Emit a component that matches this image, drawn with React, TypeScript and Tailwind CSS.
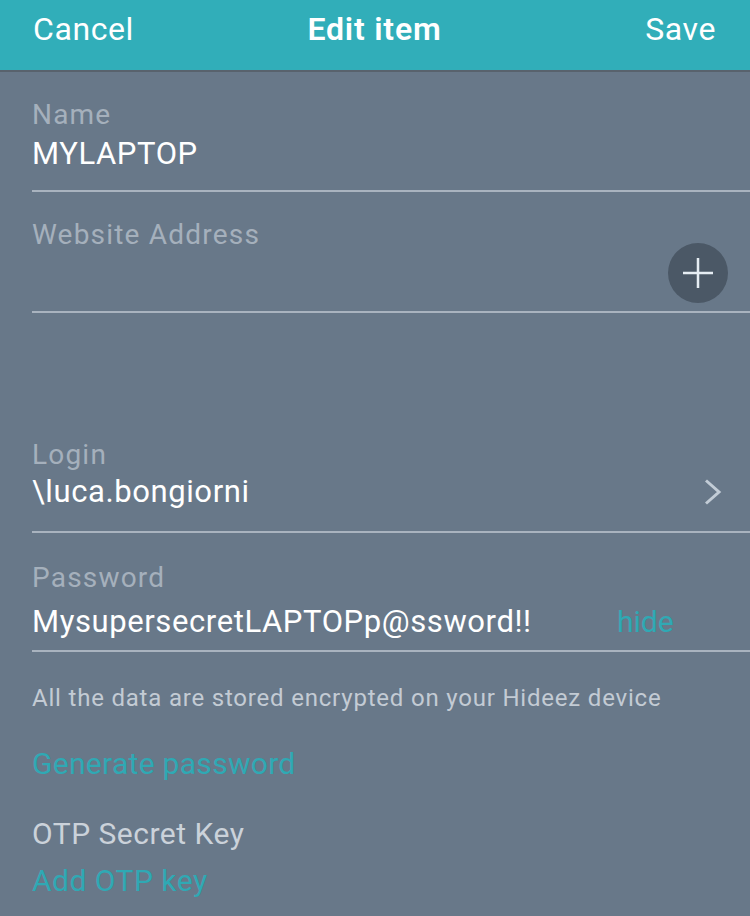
import React from 'react';

const font = { fontFamily: 'Roboto, "Noto Sans", sans-serif' };

function Divider() {
  return <div className="ml-[32px] h-[2px] bg-[#a9b3bf]"></div>;
}

function Label({ children }: { children: React.ReactNode }) {
  return <div className="text-[28px] leading-[32px] tracking-[1.2px] text-[#a5b0bc]">{children}</div>;
}

export default function App() {
  return (
    <div className="w-[750px] h-[916px] bg-[#687889] overflow-hidden" style={font}>
      {/* header */}
      <div className="h-[72px] bg-[#31aeb9] border-b-2 border-[#58626d] grid grid-cols-3 pl-[33px] pr-[34px] pt-[11px] text-white">
        <span className="text-[32px] leading-[36px] tracking-[0.6px]">Cancel</span>
        <span className="text-[32px] leading-[36px] tracking-[0.8px] font-semibold text-center whitespace-nowrap">Edit item</span>
        <span className="text-[32px] leading-[36px] tracking-[0.6px] text-right">Save</span>
      </div>

      {/* name */}
      <div className="pl-[32px] pt-[27px]">
        <Label>Name</Label>
        <div className="mt-[5px] text-[31px] leading-[36px] tracking-[0.6px] text-white">MYLAPTOP</div>
      </div>
      <div className="mt-[18px]"><Divider /></div>

      {/* website */}
      <div className="pl-[32px] pt-[27px] pr-[22px] h-[119px] flex flex-col">
        <Label>Website Address</Label>
        <div className="flex justify-end -mt-[8px]">
          <button className="w-[60px] h-[60px] rounded-full bg-[#4b5866] flex items-center justify-center">
            <svg width="32" height="32" viewBox="0 0 32 32">
              <path d="M16 1V31M1 16H31" stroke="#e6edf3" strokeWidth="2.5" />
            </svg>
          </button>
        </div>
      </div>
      <Divider />

      {/* login */}
      <div className="pl-[32px] pr-[28px] pt-[126px]">
        <Label>Login</Label>
        <div className="mt-[3px] flex items-center justify-between">
          <span className="text-[31px] leading-[36px] tracking-[0.6px] text-white">\luca.bongiorni</span>
          <svg width="18" height="26" viewBox="0 0 18 26">
            <path d="M2 1.5L15 13L2 24.5" stroke="#c2ccd6" strokeWidth="3" fill="none" />
          </svg>
        </div>
      </div>
      <div className="mt-[21px]"><Divider /></div>

      {/* password */}
      <div className="pl-[32px] pt-[29px]">
        <Label>Password</Label>
        <div className="mt-[10px] flex items-center">
          <span className="w-[585px] text-[31px] leading-[36px] tracking-[0.6px] text-white">MysupersecretLAPTOPp@ssword!!</span>
          <span className="text-[30px] leading-[36px] text-[#2fa9b4]">hide</span>
        </div>
      </div>
      <div className="mt-[10px]"><Divider /></div>

      <div className="pl-[32px] pt-[32px] text-[24px] leading-[28px] tracking-[0.8px] text-[#c3cbd4]">
        All the data are stored encrypted on your Hideez device
      </div>

      <div className="pl-[32px] pt-[34px] text-[30px] leading-[36px] tracking-[0.3px] text-[#2fa9b4]">
        Generate password
      </div>

      <div className="pl-[32px] pt-[34px] text-[30px] leading-[36px] tracking-[0.5px] text-[#cbd2da]">
        OTP Secret Key
      </div>
      <div className="pl-[32px] pt-[11px] text-[30px] leading-[36px] tracking-[0.5px] text-[#2fa9b4]">
        Add OTP key
      </div>
    </div>
  );
}
